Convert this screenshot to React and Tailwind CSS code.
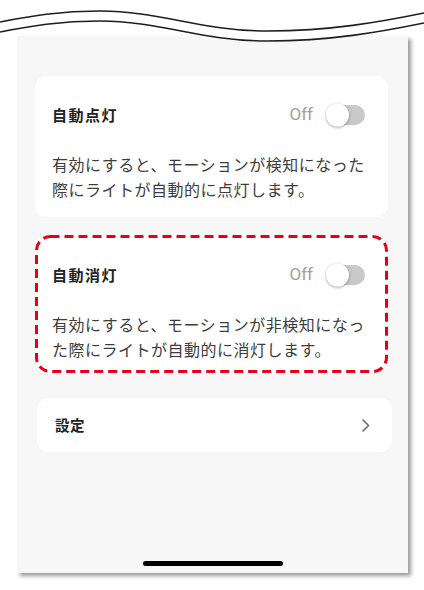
import React from "react";

const jp = { fontFamily: '"Noto Sans CJK JP", "Noto Sans", sans-serif' };

const Toggle = () => (
  <div className="relative w-[38px] h-[20px] rounded-full bg-[#c9c9c9]">
    <span className="absolute left-[-1px] top-1/2 -translate-y-1/2 w-[23px] h-[23px] rounded-full bg-white shadow-[0_1px_3px_rgba(0,0,0,0.35)]"></span>
  </div>
);

const CardHead = ({ title }) => (
  <div className="flex items-center justify-between h-[24px]">
    <span className="text-[15px] font-bold text-[#222] tracking-[1.5px]">{title}</span>
    <div className="flex items-center gap-[14px]">
      <span
        className="text-[17px] text-[#a0a0a0]"
        style={{ fontFamily: "Roboto, sans-serif" }}
      >
        Off
      </span>
      <Toggle />
    </div>
  </div>
);

const Desc = ({ children }) => (
  <p className="mt-[25px] text-[16px] leading-[25px] tracking-[0.5px] text-[#3d3d3d]">
    {children}
  </p>
);

const Wave = () => (
  <svg
    className="absolute left-0 top-0"
    width="424"
    height="50"
    viewBox="0 0 424 50"
  >
    <path
      d="M0,0 L424,0 L424,23 C380,32 330,41 268,41 C200,41 160,21 100,21 C60,21 30,26 0,32 Z"
      fill="#ffffff"
    />
    <path
      d="M0,22 C30,16 60,11 100,11 C160,11 200,31 268,31 C330,31 380,22 424,13"
      fill="none"
      stroke="#1e1e1e"
      strokeWidth="1.6"
    />
    <path
      d="M0,32 C30,26 60,21 100,21 C160,21 200,41 268,41 C330,41 380,32 424,23"
      fill="none"
      stroke="#1e1e1e"
      strokeWidth="1.6"
    />
  </svg>
);

export default function App() {
  return (
    <div className="relative w-[424px] h-[590px] bg-white overflow-hidden" style={jp}>
      <div className="ml-[17px] mt-[36px] w-[391px] h-[537px] bg-[#f7f7f7] shadow-[3px_3px_4px_rgba(0,0,0,0.4)] flex flex-col pt-[40px]">
        <div className="ml-[18px] w-[353px] h-[141px] bg-white rounded-[12px] pl-[17px] pr-[23px] pt-[27px]">
          <CardHead title="自動点灯" />
          <Desc>
            有効にすると、モーションが検知になった
            <br />
            際にライトが自動的に点灯します。
          </Desc>
        </div>

        <div className="relative mt-[18px] ml-[18px] w-[353px] h-[138px] bg-white rounded-[14px] pl-[17px] pr-[23px] pt-[28px]">
          <CardHead title="自動消灯" />
          <Desc>
            有効にすると、モーションが非検知になっ
            <br />
            た際にライトが自動的に消灯します。
          </Desc>
          <svg
            className="absolute left-0 top-0 pointer-events-none"
            width="353"
            height="138"
            viewBox="0 0 353 138"
          >
            <rect
              x="1.5"
              y="1.5"
              width="350"
              height="135"
              rx="14"
              fill="none"
              stroke="#e5001a"
              strokeWidth="3"
              strokeDasharray="9 5"
            />
          </svg>
        </div>

        <div className="mt-[25px] ml-[20px] w-[355px] h-[54px] bg-white rounded-[12px] flex items-center justify-between pl-[18px] pr-[22px]">
          <span className="text-[14.5px] font-bold text-[#222] tracking-[0.5px]">設定</span>
          <svg width="9" height="15" viewBox="0 0 9 15">
            <path d="M1.5,1.5 L7.5,7.5 L1.5,13.5" fill="none" stroke="#707070" strokeWidth="1.6" />
          </svg>
        </div>

        <div className="mt-auto mb-[7px] mx-auto w-[140px] h-[5px] rounded-full bg-black"></div>
      </div>
      <Wave />
    </div>
  );
}
